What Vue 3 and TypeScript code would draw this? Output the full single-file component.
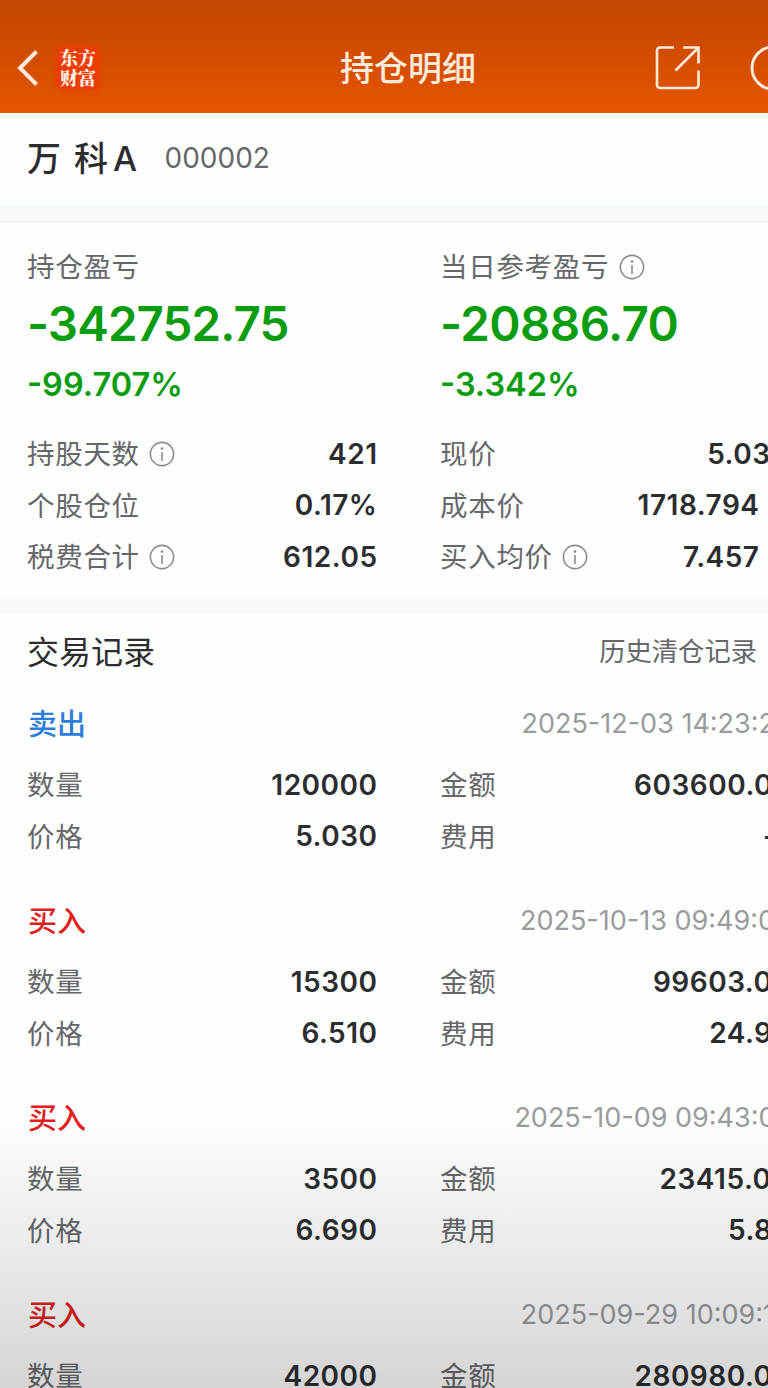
<script setup lang="ts">
interface Metric {
  label: string
  value: string
  info?: boolean
  overflow?: number
}

interface Trade {
  kind: 'sell' | 'buy'
  time: string
  timeOverflow: number
  cells: Metric[]
}

const metrics: Metric[] = [
  { label: '持股天数', value: '421', info: true },
  { label: '现价', value: '5.03', overflow: 11 },
  { label: '个股仓位', value: '0.17%' },
  { label: '成本价', value: '1718.794' },
  { label: '税费合计', value: '612.05', info: true },
  { label: '买入均价', value: '7.457', info: true },
]

const trades: Trade[] = [
  {
    kind: 'sell',
    time: '2025-12-03 14:23:2',
    timeOverflow: 16.5,
    cells: [
      { label: '数量', value: '120000' },
      { label: '金额', value: '603600.0', overflow: 13.5 },
      { label: '价格', value: '5.030' },
      { label: '费用', value: '-', overflow: 17 },
    ],
  },
  {
    kind: 'buy',
    time: '2025-10-13 09:49:0',
    timeOverflow: 16.5,
    cells: [
      { label: '数量', value: '15300' },
      { label: '金额', value: '99603.0', overflow: 13 },
      { label: '价格', value: '6.510' },
      { label: '费用', value: '24.9', overflow: 13 },
    ],
  },
  {
    kind: 'buy',
    time: '2025-10-09 09:43:0',
    timeOverflow: 17,
    cells: [
      { label: '数量', value: '3500' },
      { label: '金额', value: '23415.0', overflow: 12 },
      { label: '价格', value: '6.690' },
      { label: '费用', value: '5.8', overflow: 13 },
    ],
  },
  {
    kind: 'buy',
    time: '2025-09-29 10:09:1',
    timeOverflow: 15.5,
    cells: [
      { label: '数量', value: '42000' },
      { label: '金额', value: '280980.0', overflow: 13 },
    ],
  },
]

const shift = (px = 0) => ({ marginRight: `${-px - 0.5}px` })
</script>

<template>
  <main class="page">
    <header class="bar">
      <svg class="back" width="24" height="40" viewBox="0 0 24 40">
        <path d="M20.5 3.5 4 20 20.5 36.500" />
      </svg>
      <div class="brand"><span>东方</span><span>财富</span></div>
      <h1>持仓明细</h1>
      <svg class="share" width="48" height="48" viewBox="0 0 48 48">
        <path d="M20 3.500H6a3 3 0 0 0-3 3V41a3 3 0 0 0 3 3h35.500a3 3 0 0 0 3-3V26.500" />
        <path d="M29 3.500h15.500V19.500M44 4 21.500 26.500" />
      </svg>
      <svg class="more" width="46" height="46" viewBox="0 0 46 46">
        <circle cx="23" cy="23" r="21" />
      </svg>
    </header>

    <section class="stock">
      <span class="name">万 科<span class="board">A</span></span>
      <span class="code">000002</span>
    </section>
    <div class="band first"></div>

    <section class="summary">
      <div class="totals">
        <div>
          <div class="label"><span>持仓盈亏</span></div>
          <div class="amount">-342752.75</div>
          <div class="percent">-99.707%</div>
        </div>
        <div>
          <div class="label">
            <span>当日参考盈亏</span>
            <svg class="info" viewBox="0 0 26 26">
              <circle cx="13" cy="13" r="11.600" />
              <path d="M13 11v9" /><circle class="dot" cx="13" cy="7.600" r="1.300" />
            </svg>
          </div>
          <div class="amount short">-20886.70</div>
          <div class="percent">-3.342%</div>
        </div>
      </div>
      <div class="grid">
        <div v-for="m in metrics" :key="m.label" class="cell">
          <div class="label">
            <span>{{ m.label }}</span>
            <svg v-if="m.info" class="info" viewBox="0 0 26 26">
              <circle cx="13" cy="13" r="11.600" />
              <path d="M13 11v9" /><circle class="dot" cx="13" cy="7.600" r="1.300" />
            </svg>
          </div>
          <span class="value" :style="shift(m.overflow)">{{ m.value }}</span>
        </div>
      </div>
    </section>
    <div class="band second"></div>

    <section class="records">
      <div class="records-head">
        <h2>交易记录</h2>
        <span class="history">历史清仓记录</span>
      </div>
      <article v-for="t in trades" :key="t.time" class="trade">
        <div class="trade-head">
          <span :class="['kind', t.kind]">{{ t.kind === 'sell' ? '卖出' : '买入' }}</span>
          <time :style="shift(t.timeOverflow)">{{ t.time }}</time>
        </div>
        <div class="grid">
          <div v-for="c in t.cells" :key="c.label" class="cell">
            <div class="label"><span>{{ c.label }}</span></div>
            <span class="value" :style="shift(c.overflow)">{{ c.value }}</span>
          </div>
        </div>
      </article>
    </section>
    <div class="shade"></div>
  </main>
</template>

<style>
body {
  margin: 0;
  overflow: hidden;
}
</style>

<style scoped>
.page {
  position: relative;
  width: 768px;
  height: 1388px;
  overflow: hidden;
  background: #fefefe;
  color: #2c2d2f;
  font-family: Inter, "Noto Sans CJK SC", sans-serif;
  white-space: nowrap;
}
.bar {
  box-sizing: border-box;
  display: flex;
  align-items: center;
  height: 112.500px;
  padding: 24px 0 0 16px;
  background: linear-gradient(#c54700, #d04c00 45%, #e65500);
}
.bar svg {
  flex: none;
  fill: none;
  stroke: #fbe9dc;
}
.bar .back {
  stroke-width: 4;
}
.brand {
  display: flex;
  flex: none;
  flex-direction: column;
  align-items: center;
  justify-content: center;
  box-sizing: border-box;
  width: 42px;
  height: 42px;
  margin-left: 17px;
  padding-bottom: 2px;
  border-radius: 6px;
  background: #ec3d06;
  box-shadow: 0 0 4px 1px #ec3d06;
  color: #fdeee4;
  font: 900 18px/20px "Noto Serif CJK SC", "Noto Sans CJK SC", sans-serif;
}
h1 {
  flex: none;
  width: 140px;
  margin: 1px 0 0 241px;
  color: #fbe9dc;
  font-size: 34px;
  font-weight: 500;
  line-height: 48px;
}
.share {
  margin-left: 174px;
  stroke-width: 2.600;
}
.more {
  margin-left: 48px;
  stroke-width: 3;
}
.stock {
  display: flex;
  align-items: center;
  height: 92.500px;
  box-sizing: border-box;
  padding: 0 0 2px 27px;
}
.name {
  width: 137.500px;
  padding-bottom: 3px;
  font-size: 34px;
  font-weight: 500;
  letter-spacing: 2px;
}
.board {
  margin-left: 3px;
}
.code {
  color: #66676a;
  font-size: 28px;
}
.band {
  background: #f5f9fa;
}
.first {
  height: 18px;
}
.second {
  height: 14px;
}
.summary {
  box-sizing: border-box;
  height: 376px;
  padding: 20px 10px 0 28px;
}
.totals {
  display: grid;
  grid-template-columns: 413px 1fr;
  height: 185px;
}
.label {
  display: flex;
  align-items: center;
  margin-left: -1px;
  color: #66676a;
  font-size: 27.500px;
  letter-spacing: 0.700px;
}
.label span {
  padding-bottom: 3px;
}
.totals .label {
  height: 47px;
}
.info {
  width: 26px;
  height: 26px;
  margin: 1px 0 0 9.500px;
  fill: none;
  stroke: #8b8c8e;
  stroke-width: 1.600;
}
.info .dot {
  fill: #8b8c8e;
  stroke: none;
}
.amount {
  height: 67px;
  margin-left: -1px;
  color: #0a9d0f;
  font-size: 47.500px;
  font-weight: 600;
  line-height: 67px;
  letter-spacing: -0.900px;
}
.amount.short {
  letter-spacing: -0.600px;
}
.percent {
  height: 52px;
  margin-left: -1px;
  padding-top: 2px;
  color: #0a9d0f;
  font-size: 32.500px;
  font-weight: 600;
  line-height: 52px;
}
.grid {
  display: grid;
  grid-template-columns: 349px 318px;
  column-gap: 64px;
  grid-auto-rows: 51.500px;
}
.cell {
  display: flex;
  align-items: center;
  justify-content: space-between;
}
.value {
  font-size: 28px;
  font-weight: 600;
  letter-spacing: 0.500px;
}
.records {
  padding: 0 10px 0 28px;
}
.records-head {
  display: flex;
  align-items: center;
  justify-content: space-between;
  height: 74px;
}
h2 {
  margin: 0 0 1px -1px;
  font-size: 32px;
  font-weight: 400;
}
.history {
  margin: 0 1px 1px 0;
  color: #66676a;
  font-size: 26.300px;
}
.trade {
  height: 197px;
}
.trade-head {
  display: flex;
  align-items: center;
  justify-content: space-between;
  height: 72px;
}
.kind {
  padding-bottom: 3px;
  font-size: 29px;
  font-weight: 500;
}
.sell {
  color: #2b7edb;
}
.buy {
  color: #e02020;
}
time {
  color: #9a9b9d;
  font-size: 27px;
}
.shade {
  position: absolute;
  inset: 1115px 0 0;
  background: linear-gradient(transparent, rgb(0 0 0 / 3%) 20%, rgb(0 0 0 / 16%));
  pointer-events: none;
}
</style>
